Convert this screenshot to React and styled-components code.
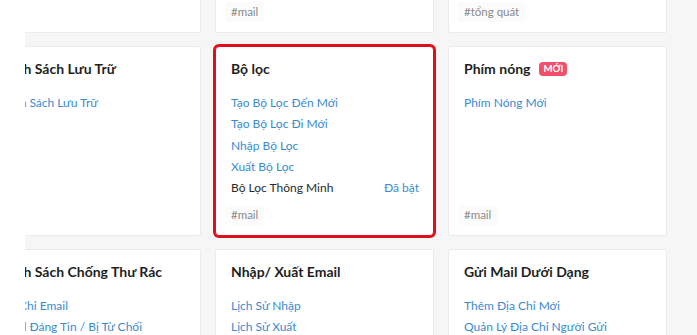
import React from 'react';
import styled, { createGlobalStyle } from 'styled-components';

const GlobalStyle = createGlobalStyle`
  html, body {
    margin: 0;
    padding: 0;
    background: #f6f6f6;
  }
  body {
    font-family: Lato, "Liberation Sans", "Noto Sans", sans-serif;
    color: #222;
  }
`;

const sections = [
  { id: 'top1', title: 'Danh Sách Thư', links: ['Thư Mới', 'Thư Đã Gửi'], tag: '' },
  { id: 'top2', title: 'Hộp Thư', links: ['Cài Đặt Hộp Thư'], tag: '#mail' },
  { id: 'top3', title: 'Cài Đặt Chung', links: ['Ngôn Ngữ'], tag: '#tổng quát' },
  { id: 'archive', title: 'Danh Sách Lưu Trữ', links: ['Danh Sách Lưu Trữ'], tag: '' },
  {
    id: 'filter',
    title: 'Bộ lọc',
    active: true,
    links: ['Tạo Bộ Lọc Đến Mới', 'Tạo Bộ Lọc Đi Mới', 'Nhập Bộ Lọc', 'Xuất Bộ Lọc'],
    toggle: { label: 'Bộ Lọc Thông Minh', value: 'Đã bật' },
    tag: '#mail',
  },
  { id: 'hotkey', title: 'Phím nóng', badge: 'MỚI', links: ['Phím Nóng Mới'], tag: '#mail' },
  { id: 'spam', title: 'Danh Sách Chống Thư Rác', links: ['Địa Chỉ Email', 'Email Đáng Tin / Bị Từ Chối'], tag: '' },
  { id: 'io', title: 'Nhập/ Xuất Email', links: ['Lịch Sử Nhập', 'Lịch Sử Xuất'], tag: '' },
  { id: 'sendas', title: 'Gửi Mail Dưới Dạng', links: ['Thêm Địa Chỉ Mới', 'Quản Lý Địa Chỉ Người Gửi'], tag: '' },
];

const App = () => {
  return (
    <>
      <GlobalStyle />
      <Page>
        <Sidebar />
        <Main>
          <CardGrid>
            {sections.map((s) => (
              <Card key={s.id} $active={s.active}>
                <TitleRow>
                  <Title>{s.title}</Title>
                  {s.badge && <Badge>{s.badge}</Badge>}
                </TitleRow>
                <LinkList>
                  {s.links.map((l) => (
                    <LinkItem key={l}>{l}</LinkItem>
                  ))}
                  {s.toggle && (
                    <ToggleRow>
                      <span>{s.toggle.label}</span>
                      <ToggleValue>{s.toggle.value}</ToggleValue>
                    </ToggleRow>
                  )}
                </LinkList>
                {s.tag && <Tag>{s.tag}</Tag>}
              </Card>
            ))}
          </CardGrid>
        </Main>
      </Page>
    </>
  );
};

export default App;

const Page = styled.div`
  display: flex;
  width: 697px;
  height: 335px;
  overflow: hidden;
`;

const Sidebar = styled.aside`
  width: 25px;
  flex-shrink: 0;
  background: #fff;
`;

const Main = styled.main`
  flex: 1;
  overflow: hidden;
  background: #f6f6f6;
`;

const CardGrid = styled.div`
  display: grid;
  grid-template-columns: repeat(3, 219px);
  grid-auto-rows: minmax(190px, auto);
  column-gap: 14px;
  row-gap: 13px;
  margin: -157px 0 0 -43px;
`;

const Card = styled.section`
  display: flex;
  flex-direction: column;
  box-sizing: border-box;
  background: #fff;
  border: 1px solid ${(p) => (p.$active ? '#e10d1a' : '#ebebeb')};
  border-radius: ${(p) => (p.$active ? '4px' : '2px')};
  box-shadow: ${(p) => (p.$active ? '0 0 0 2px #e10d1a' : 'none')};
  padding: 12px 14px 10px 15px;
`;

const TitleRow = styled.div`
  display: flex;
  align-items: center;
  gap: 9px;
  margin-bottom: 13px;
`;

const Title = styled.h3`
  margin: 0;
  font-size: 14px;
  line-height: 20px;
  font-weight: 700;
  color: #1f1f1f;
  white-space: nowrap;
`;

const Badge = styled.span`
  display: inline-block;
  padding: 0 4px;
  height: 14px;
  line-height: 14px;
  border-radius: 4px;
  background: #f0506b;
  color: #fff;
  font-size: 9.5px;
  font-weight: 700;
`;

const LinkList = styled.div`
  display: flex;
  flex-direction: column;
`;

const LinkItem = styled.a`
  font-size: 12px;
  line-height: 21.25px;
  color: #3a8bd2;
  white-space: nowrap;
  cursor: pointer;
`;

const ToggleRow = styled.div`
  display: flex;
  justify-content: space-between;
  font-size: 12px;
  line-height: 21.25px;
  color: #2a2a2a;
`;

const ToggleValue = styled.span`
  color: #3a8bd2;
`;

const Tag = styled.span`
  align-self: flex-start;
  margin: auto 0 0 -6px;
  padding: 2px 6px;
  font-size: 11.5px;
  line-height: 16px;
  color: #8a8a8a;
  background: #fbfbfb;
  border-radius: 3px;
`;
